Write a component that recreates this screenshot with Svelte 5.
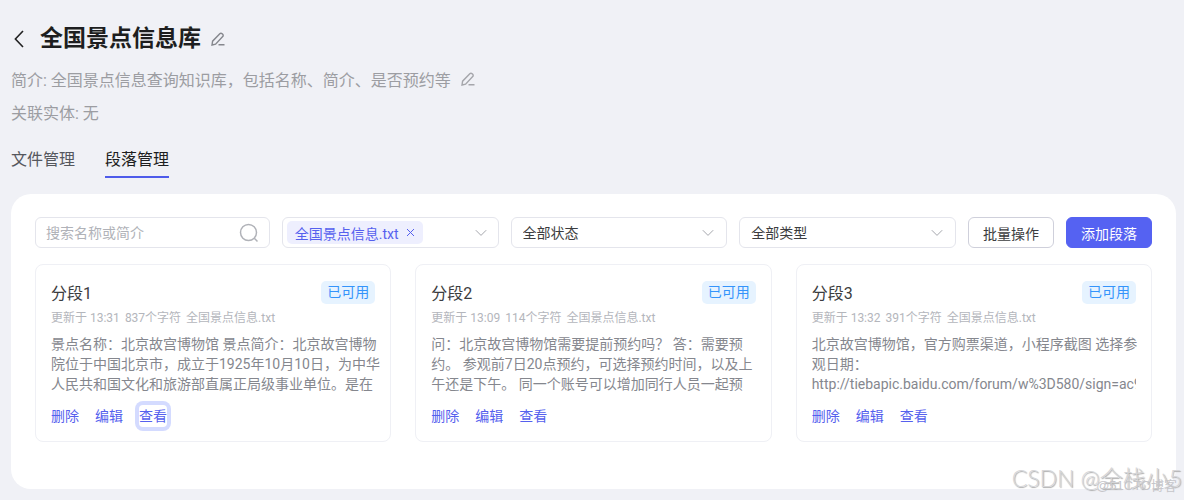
<script>
	let search = $state('');
	let status = $state('all');
	let type = $state('all');
	let files = $state(['全国景点信息.txt']);

	const segments = [
		{
			name: '分段1',
			time: '13:31',
			chars: 837,
			text: '景点名称：北京故宫博物馆 景点简介：北京故宫博物\n院位于中国北京市，成立于1925年10月10日，为中华\n人民共和国文化和旅游部直属正局级事业单位。是在',
			viewing: true
		},
		{
			name: '分段2',
			time: '13:09',
			chars: 114,
			text: '问：北京故宫博物馆需要提前预约吗？ 答：需要预\n约。 参观前7日20点预约，可选择预约时间，以及上\n午还是下午。 同一个账号可以增加同行人员一起预'
		},
		{
			name: '分段3',
			time: '13:32',
			chars: 391,
			text: '北京故宫博物馆，官方购票渠道，小程序截图 选择参\n观日期：',
			url: 'http://tiebapic.baidu.com/forum/w%3D580/sign=ac9b'
		}
	];
</script>

{#snippet pen()}
	<svg class="pen" viewBox="0 0 14 14" aria-hidden="true">
		<path d="M1 13l.6-3.8L8.8 1.7a1.6 1.6 0 0 1 2.3 0l.6.6a1.6 1.6 0 0 1 0 2.3L4.6 12.2zM7.5 12.7H13.5" />
	</svg>
{/snippet}

{#snippet arrow()}
	<svg class="arrow" viewBox="0 0 12 8" aria-hidden="true"><path d="M.8 1.2L6 6.4l5.2-5.2" /></svg>
{/snippet}

<main>
	<header>
		<div class="title">
			<button class="icon back" aria-label="返回">
				<svg viewBox="0 0 10 18" aria-hidden="true"><path d="M9 1L1.4 9 9 17" /></svg>
			</button>
			<h1>全国景点信息库</h1>
			<button class="icon" aria-label="编辑名称">{@render pen()}</button>
		</div>
		<div class="info">
			<span>简介: 全国景点信息查询知识库，包括名称、简介、是否预约等</span>
			<button class="icon light" aria-label="编辑简介">{@render pen()}</button>
		</div>
		<div class="info">关联实体: 无</div>
	</header>

	<nav>
		<a href="#files">文件管理</a>
		<a href="#segments" class="current">段落管理</a>
	</nav>

	<section class="panel">
		<div class="toolbar">
			<label class="field search">
				<input type="text" placeholder="搜索名称或简介" aria-label="搜索名称或简介" bind:value={search} />
				<svg viewBox="0 0 20 20" aria-hidden="true"><circle cx="9.5" cy="9.5" r="8" /><path d="M15.3 15.3L18.5 18.5" /></svg>
			</label>
			<div class="field files">
				{#each files as file}
					<span class="tag">
						{file}
						<button class="icon" aria-label="移除" onclick={() => (files = files.filter((f) => f !== file))}>
							<svg viewBox="0 0 9 9" aria-hidden="true"><path d="M1 1l7 7M8 1L1 8" /></svg>
						</button>
					</span>
				{/each}
				<button class="icon open" aria-label="选择文件">{@render arrow()}</button>
			</div>
			<label class="field">
				<select aria-label="状态" bind:value={status}>
					<option value="all">全部状态</option>
					<option value="ok">已可用</option>
				</select>
				{@render arrow()}
			</label>
			<label class="field">
				<select aria-label="类型" bind:value={type}>
					<option value="all">全部类型</option>
				</select>
				{@render arrow()}
			</label>
			<button class="btn">批量操作</button>
			<button class="btn primary">添加段落</button>
		</div>

		<div class="cards">
			{#each segments as s}
				<article>
					<div class="head">
						<h2>{s.name}</h2>
						<span class="badge">已可用</span>
					</div>
					<div class="meta">
						<span>更新于 {s.time}</span>
						<span>{s.chars}个字符</span>
						<span>全国景点信息.txt</span>
					</div>
					<div class="text">
						{s.text}
						{#if s.url}<span class="url">{s.url}</span>{/if}
					</div>
					<div class="actions">
						<button>删除</button>
						<button>编辑</button>
						<button class:viewing={s.viewing}>查看</button>
					</div>
				</article>
			{/each}
		</div>
	</section>

	<div class="mark csdn">CSDN @全栈小5</div>
	<div class="mark cto">@51CTO博客</div>
</main>

<style>
	:global(body) {
		background: #f0f1f6;
	}
	* {
		box-sizing: border-box;
	}
	main {
		position: relative;
		padding: 23px 8px 11px 11px;
		font-family: Roboto, 'Noto Sans CJK SC', sans-serif;
		font-size: 14px;
		color: #3c3d40;
	}
	button,
	input,
	select {
		font: inherit;
		color: inherit;
		border: 0;
		background: none;
		padding: 0;
		margin: 0;
	}
	button {
		cursor: pointer;
		white-space: nowrap;
	}
	svg {
		display: block;
		fill: none;
		stroke: currentColor;
	}
	h1,
	h2 {
		margin: 0;
	}
	.title {
		display: flex;
		align-items: center;
		height: 32px;
		margin-bottom: 12px;
	}
	h1 {
		font-size: 23px;
		line-height: 32px;
		color: #1d1e20;
		margin: 0 10px 0 16px;
	}
	.icon {
		display: flex;
		color: #85878d;
	}
	.light {
		color: #a5a6ab;
	}
	.back {
		padding-left: 3px;
		color: #222;
	}
	.back svg {
		width: 10px;
		height: 18px;
		stroke-width: 1.6;
	}
	.pen {
		width: 14px;
		height: 14px;
		stroke-width: 1.4;
	}
	.info {
		display: flex;
		align-items: center;
		gap: 10px;
		height: 24px;
		margin-bottom: 9px;
		font-size: 16px;
		color: #9c9da2;
	}
	nav {
		display: flex;
		gap: 30px;
		margin: 24px 0 16px;
	}
	nav a {
		font-size: 16px;
		line-height: 24px;
		padding-bottom: 4px;
		border-bottom: 2px solid transparent;
		color: #55575d;
		text-decoration: none;
	}
	nav .current {
		color: #1d1e20;
		border-color: #4e5bea;
	}
	.panel {
		padding: 23px 24px 47px;
		border-radius: 20px;
		background: #fff;
	}
	.toolbar {
		display: grid;
		grid-template-columns: minmax(0, 13fr) repeat(3, minmax(0, 12fr)) auto auto;
		gap: 12px;
		margin-bottom: 16px;
	}
	.field {
		height: 31px;
		display: flex;
		align-items: center;
		position: relative;
		border: 1px solid #e4e5ec;
		border-radius: 6px;
	}
	.search {
		padding: 0 10px;
	}
	.search input {
		flex: 1;
		min-width: 0;
		outline: none;
	}
	.search input::placeholder {
		color: #b0b2b8;
	}
	.search svg {
		width: 20px;
		height: 20px;
		stroke: #b0b2b8;
		stroke-width: 1.5;
	}
	select {
		width: 100%;
		height: 100%;
		padding: 0 32px 0 11px;
		appearance: none;
		outline: none;
	}
	.arrow {
		width: 12px;
		height: 8px;
		color: #a4a6ac;
	}
	select + :global(.arrow) {
		position: absolute;
		right: 12px;
		pointer-events: none;
	}
	.files {
		padding: 0 11px 0 4px;
	}
	.open {
		margin-left: auto;
	}
	.tag {
		display: flex;
		align-items: center;
		gap: 7px;
		height: 23px;
		padding: 0 8px;
		border-radius: 5px;
		background: #eeeffe;
		color: #5560ee;
		white-space: nowrap;
	}
	.tag .icon {
		color: #5560ee;
	}
	.tag svg {
		width: 9px;
		height: 9px;
	}
	.btn {
		height: 31px;
		padding: 0 14px;
		border: 1px solid #cfd0db;
		border-radius: 6px;
	}
	.primary {
		color: #fff;
		background: #5562f2;
		border-color: #5562f2;
	}
	.cards {
		display: grid;
		grid-template-columns: repeat(3, minmax(0, 1fr));
		gap: 24px;
	}
	article {
		padding: 15px 15px 14px;
		border: 1px solid #eff0f5;
		border-radius: 8px;
	}
	.head {
		display: flex;
		justify-content: space-between;
		align-items: center;
		height: 24px;
		margin-bottom: 5px;
	}
	h2 {
		font-size: 16px;
		font-weight: 400;
	}
	.badge {
		line-height: 23px;
		padding: 0 6px;
		border-radius: 5px;
		background: #e6f3ff;
		color: #3494fb;
	}
	.meta {
		display: flex;
		gap: 5px;
		height: 18px;
		line-height: 18px;
		margin-bottom: 7px;
		font-size: 12px;
		color: #b4b6bc;
		white-space: nowrap;
	}
	.text {
		height: 60px;
		line-height: 20px;
		margin-bottom: 11px;
		color: #85878e;
		white-space: pre-line;
		word-break: keep-all;
		text-wrap: nowrap;
	}
	.url {
		display: block;
		overflow: hidden;
	}
	.actions {
		display: flex;
		gap: 16px;
	}
	.actions button {
		height: 22px;
		line-height: 22px;
		color: #5560ee;
		border-radius: 4px;
	}
	.actions .viewing {
		box-shadow: 0 0 0 4px #d4dbff;
	}
	.mark {
		position: absolute;
		white-space: nowrap;
		pointer-events: none;
	}
	.csdn {
		right: 2px;
		bottom: 6px;
		font-family: Lato, 'Noto Sans CJK SC', sans-serif;
		font-size: 23px;
		font-weight: 300;
		line-height: 32px;
		color: #d6d6d8;
		text-shadow: 1px 1px 1px #aaa;
	}
	.cto {
		right: 7px;
		bottom: 4px;
		font-family: 'Liberation Sans', 'Noto Sans CJK SC', sans-serif;
		font-size: 13px;
		line-height: 20px;
		color: #c6c6ca;
	}
</style>
